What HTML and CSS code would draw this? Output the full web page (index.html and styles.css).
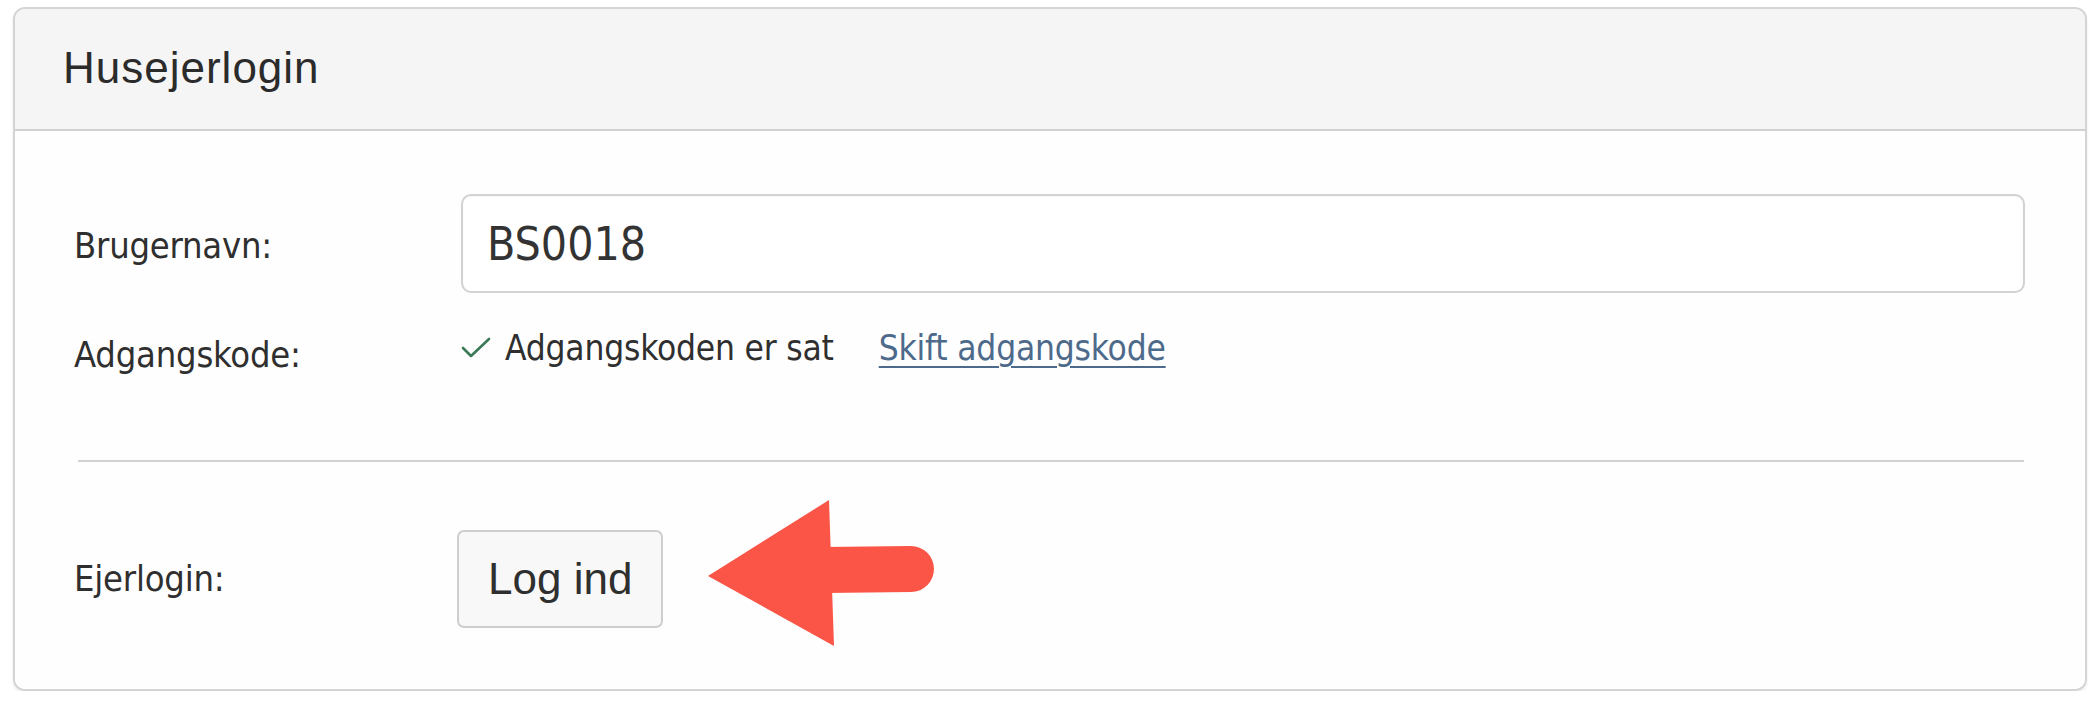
FILE: index.html
```html
<!DOCTYPE html>
<html lang="da">
<head>
<meta charset="utf-8">
<title>Husejerlogin</title>
<link rel="stylesheet" href="styles.css">
</head>
<body>
<div class="card">
  <div class="card-header">
    <h1 class="title">Husejerlogin</h1>
  </div>
  <div class="card-body">
    <div class="row row-user">
      <label class="label" for="user">Brugernavn:</label>
      <input class="text-input" id="user" type="text" value="BS0018" readonly>
    </div>
    <div class="row row-pass">
      <span class="label label-pass">Adgangskode:</span>
      <div class="value">
        <svg class="check" viewBox="0 0 30 21" width="30" height="21" aria-hidden="true">
          <polyline points="2,11 10,19 28,2" fill="none" stroke="#3b7a57" stroke-width="2.6" stroke-linecap="round" stroke-linejoin="round"/>
        </svg>
        <span class="status">Adgangskoden er sat</span>
        <a class="link" href="#">Skift adgangskode</a>
      </div>
    </div>
    <div class="divider"></div>
    <div class="row row-login">
      <span class="label">Ejerlogin:</span>
      <button class="btn" type="button">Log ind</button>
      <svg class="arrow" viewBox="0 0 245 160" width="245" height="160" aria-hidden="true">
        <line x1="125" y1="75" x2="211" y2="74" stroke="#fa5546" stroke-width="46" stroke-linecap="round"/>
        <polygon points="8,81 129,5 134,151" fill="#fa5546"/>
      </svg>
    </div>
  </div>
</div>
</body>
</html>
```

FILE: styles.css
```css
* {
  box-sizing: border-box;
}

html, body {
  margin: 0;
  padding: 0;
  background: #ffffff;
}

body {
  padding: 7px 9px 0 13px;
  font-family: "DejaVu Sans Condensed", "DejaVu Sans", sans-serif;
  color: #333333;
}

.card {
  border: 2px solid #d4d4d4;
  border-radius: 12px;
  background: #fdfdfd;
  box-shadow: 0 2px 3px rgba(0, 0, 0, 0.08);
  overflow: hidden;
}

.card-header {
  background: #f5f5f5;
  border-bottom: 2px solid #d0d0d0;
  padding: 34px 48px 36px;
}

.title {
  margin: 0;
  font-family: "Liberation Sans", Arial, sans-serif;
  font-weight: normal;
  font-size: 44px;
  line-height: 50px;
  letter-spacing: 1px;
  color: #2b2b2b;
}

.card-body {
  padding: 63px 60px 61px 59px;
  background: #fefefe;
}

.row {
  display: flex;
  align-items: center;
}

.label {
  flex: 0 0 387px;
  font-size: 36px;
  line-height: 44px;
  letter-spacing: -0.2px;
  color: #2f2f2f;
}

.row-user .label {
  padding-top: 5px;
}

.text-input {
  flex: 1 1 auto;
  height: 99px;
  border: 2px solid #d2d2d2;
  border-radius: 10px;
  background: #ffffff;
  padding: 0 0 0 24px;
  font-family: "DejaVu Sans Condensed", "DejaVu Sans", sans-serif;
  font-size: 46px;
  color: #333333;
  outline: none;
  box-shadow: inset 0 1px 2px rgba(0, 0, 0, 0.04);
}

.row-pass {
  margin-top: 33px;
  align-items: flex-start;
}

.label-pass {
  padding-top: 7px;
}

.value {
  display: flex;
  align-items: flex-start;
  font-size: 35px;
  line-height: 44px;
  letter-spacing: -0.2px;
}

.check {
  flex: none;
  margin-top: 11px;
  margin-right: 14px;
}

.status {
  color: #2f2f2f;
}

.link {
  margin-left: 45px;
  color: #4d6a8b;
  text-decoration: underline;
  text-underline-offset: 6px;
  text-decoration-thickness: 2px;
}

.divider {
  margin-top: 83px;
  height: 2px;
  background: #d2d2d2;
  margin-left: 4px;
  margin-right: 1px;
}

.row-login {
  position: relative;
  margin-top: 68px;
}

.btn {
  height: 98px;
  margin-left: -4px;
  padding: 0 29px;
  border: 2px solid #cdcdcd;
  border-radius: 7px;
  background: #f8f8f8;
  font-family: "Liberation Sans", Arial, sans-serif;
  font-size: 44px;
  color: #2f2f2f;
}

.arrow {
  position: absolute;
  left: 626px;
  top: -35px;
}
```
